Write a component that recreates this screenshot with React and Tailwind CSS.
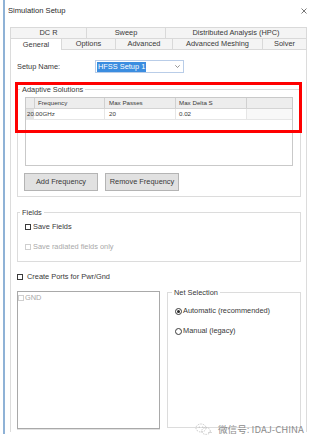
export default function App() {
  const tabCell = "flex items-center justify-center border-t border-l border-[#d9d9d9]";

  const Check = ({ disabled }) => (
    <span
      className={
        "inline-block w-[6px] h-[6px] border bg-white " +
        (disabled ? "border-[#cfcfcf]" : "border-[#3a3a3a]")
      }
    />
  );

  const Radio = ({ checked }) => (
    <span className="flex items-center justify-center w-[7px] h-[7px] rounded-full border border-[#3a3a3a] bg-white">
      {checked && <span className="w-[3px] h-[3px] rounded-full bg-[#2a2a2a]" />}
    </span>
  );

  return (
    <div className="relative w-[316px] h-[442px] overflow-hidden bg-white font-['Liberation_Sans',Arial,sans-serif] text-[7.4px] leading-none text-[#383838]">
      <div className="flex">
        <div className="w-[3px]" />
        <div className="w-[2px] h-[434px] bg-[#8fb2d6]" />

        <div className="w-[311px] flex flex-col">
          {/* title bar */}
          <div className="h-[22px] flex items-center justify-between pl-[3px] pr-[9px]">
            <span className="text-[7.6px] text-[#2a2a2a]">Simulation Setup</span>
            <svg width="6" height="6" viewBox="0 0 6 6">
              <path d="M0.5 0.5L5.5 5.5M5.5 0.5L0.5 5.5" stroke="#555" strokeWidth="0.8" />
            </svg>
          </div>

          {/* tabs */}
          <div className="mt-[5px] ml-[5px] w-[297px]">
            <div className="flex h-[11px] bg-[#f4f4f4]">
              <div className={tabCell + " w-[76px]"}>DC R</div>
              <div className={tabCell + " w-[79px]"}>Sweep</div>
              <div className={tabCell + " w-[142px] border-r"}>Distributed Analysis (HPC)</div>
            </div>
            <div className="flex h-[12px]">
              <div className={tabCell + " w-[51px] bg-white"}>General</div>
              <div className={tabCell + " w-[54px] border-b bg-[#f4f4f4]"}>Options</div>
              <div className={tabCell + " w-[57px] border-b bg-[#f4f4f4]"}>Advanced</div>
              <div className={tabCell + " w-[90px] border-b bg-[#f4f4f4]"}>Advanced Meshing</div>
              <div className={tabCell + " w-[45px] border-b border-r bg-[#f4f4f4]"}>Solver</div>
            </div>
          </div>

          {/* panel */}
          <div className="ml-[5px] w-[297px] h-[382px] border-l border-r border-[#dcdcdc] pl-[6px] pr-[5px]">
            <div className="mt-[10px] flex items-center h-[13px]">
              <span className="w-[78px]">Setup Name:</span>
              <div className="w-[89px] h-[13px] border border-[#b9cde8] flex items-center justify-between pl-[1px] pr-[3px]">
                <span className="h-[10px] flex items-center bg-[#3b8de0] text-white px-[1px]">HFSS Setup 1</span>
                <svg width="5" height="3" viewBox="0 0 5 3">
                  <path d="M0.3 0.3L2.5 2.5L4.7 0.3" fill="none" stroke="#666" strokeWidth="0.7" />
                </svg>
              </div>
            </div>

            {/* adaptive solutions */}
            <fieldset className="mt-[12px] border border-[#dcdcdc]">
              <legend className="ml-[2px] px-[2px] leading-[9px]">Adaptive Solutions</legend>
              <div className="px-[7px] pb-[5px]">
                <div className="mt-[3px] w-[268px] h-[69px] border border-[#c9c9c9] bg-white text-[6.2px]">
                  <div className="flex h-[11px] bg-[#ededed] border-b border-[#d4d4d4]">
                    <div className="w-[8px]" />
                    <div className="w-[70px] border-l border-[#d0d0d0] pl-[3px] flex items-center">Frequency</div>
                    <div className="w-[71px] border-l border-[#d0d0d0] pl-[4px] flex items-center">Max Passes</div>
                    <div className="w-[71px] border-l border-[#d0d0d0] pl-[3px] flex items-center">Max Delta S</div>
                    <div className="flex-1 border-l border-[#d0d0d0]" />
                  </div>
                  <div className="flex h-[11px] border-b border-[#e6e6e6]">
                    <div className="w-[78px] pl-[1px] flex items-center bg-[linear-gradient(to_right,#e4e4e4_8px,transparent_8px)]">
                      20.00GHz
                    </div>
                    <div className="w-[71px] border-l border-[#e6e6e6] pl-[4px] flex items-center">20</div>
                    <div className="w-[71px] border-l border-[#e6e6e6] pl-[3px] flex items-center">0.02</div>
                    <div className="flex-1 border-l border-[#e6e6e6] bg-[#f8f8f8]" />
                  </div>
                </div>
                <div className="mt-[7px] -ml-[1px] flex gap-[7px]">
                  <button className="w-[74px] h-[18px] bg-[#e1e1e1] border border-[#b4b4b4]">Add Frequency</button>
                  <button className="w-[74px] h-[18px] bg-[#e1e1e1] border border-[#b4b4b4]">Remove Frequency</button>
                </div>
              </div>
            </fieldset>

            {/* fields */}
            <fieldset className="mt-[11px] border border-[#dcdcdc]">
              <legend className="ml-[2px] px-[2px] leading-[9px]">Fields</legend>
              <div className="px-[7px] pb-[9px]">
                <div className="mt-[5px] h-[10px] flex items-center gap-[2px]">
                  <Check />
                  <span>Save Fields</span>
                </div>
                <div className="mt-[10px] h-[10px] flex items-center gap-[2px] text-[#a8a8a8]">
                  <Check disabled />
                  <span>Save radiated fields only</span>
                </div>
              </div>
            </fieldset>

            <div className="mt-[10px] h-[10px] flex items-center gap-[4px]">
              <Check />
              <span>Create Ports for Pwr/Gnd</span>
            </div>

            <div className="mt-[6px] flex items-start gap-[7px]">
              <div className="mt-[3px] w-[143px] h-[138px] border border-[#a9a9a9] shadow-[0_1px_0_#e2e2e2]">
                <div className="mt-[2px] h-[7px] flex items-center gap-[1px] text-[#a8a8a8]">
                  <Check disabled />
                  <span>GND</span>
                </div>
              </div>
              <fieldset className="w-[134px] h-[140px] border border-[#dcdcdc]">
                <legend className="ml-[4px] px-[2px] leading-[9px]">Net Selection</legend>
                <div className="pl-[7px]">
                  <div className="mt-[9px] h-[10px] flex items-center gap-[1px]">
                    <Radio checked />
                    <span>Automatic (recommended)</span>
                  </div>
                  <div className="mt-[10px] h-[10px] flex items-center gap-[1px]">
                    <Radio />
                    <span>Manual (legacy)</span>
                  </div>
                </div>
              </fieldset>
            </div>
          </div>
        </div>
      </div>

      {/* annotation */}
      <div className="absolute left-[15px] top-[82px] w-[287px] h-[51px] border-[3px] border-[#ff0000]" />

      {/* watermark */}
      <div className="absolute left-[195px] top-[423px] flex items-center gap-[6px] text-[#8c8c8c]">
        <svg width="17" height="13" viewBox="0 0 17 13">
          <ellipse cx="6" cy="5" rx="5" ry="4" fill="none" stroke="#bdbdbd" strokeWidth="0.8" strokeDasharray="1.5 1" />
          <ellipse cx="11" cy="8" rx="4.3" ry="3.4" fill="none" stroke="#bdbdbd" strokeWidth="0.8" strokeDasharray="1.5 1" />
          <circle cx="4.3" cy="4" r="0.6" fill="#b0b0b0" />
          <circle cx="7.7" cy="4" r="0.6" fill="#b0b0b0" />
          <line x1="13" y1="9.5" x2="17" y2="9.5" stroke="#c8c8c8" strokeWidth="0.7" />
        </svg>
        <span className="font-['Noto_Sans_CJK_SC',sans-serif] text-[9.6px]">微信号: IDAJ-CHINA</span>
      </div>
    </div>
  );
}
